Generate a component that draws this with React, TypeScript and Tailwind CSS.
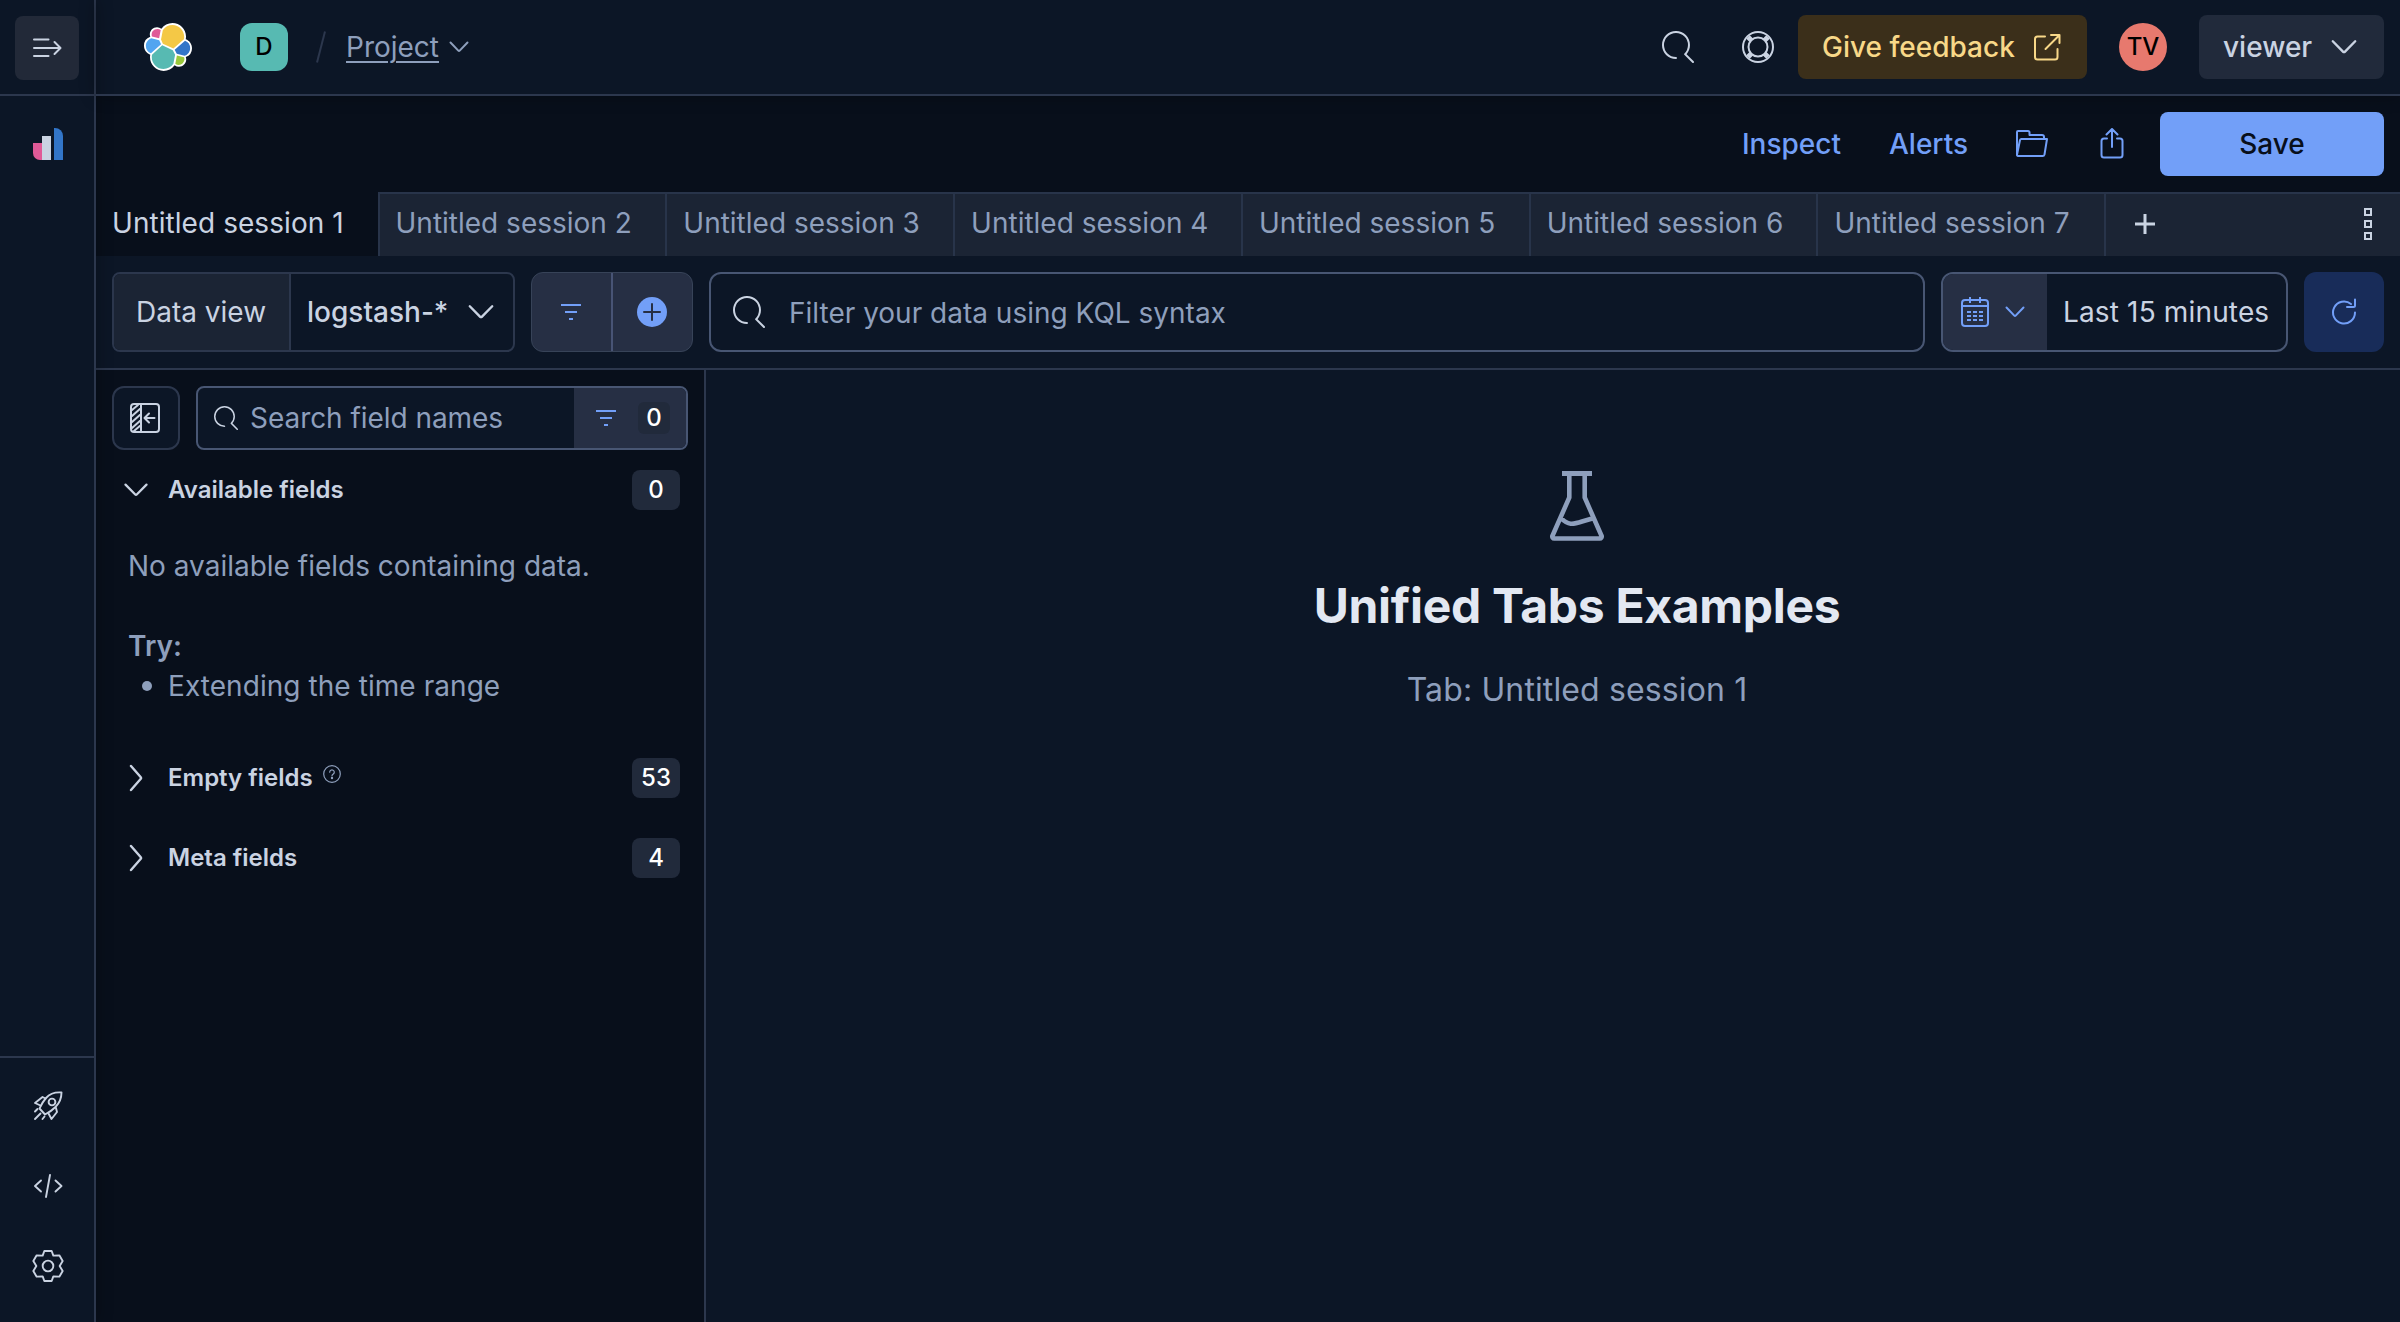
import React from "react";

type P = { className?: string };

const Search = ({ className }: P) => (
  <svg viewBox="0 0 16 16" className={className} fill="currentColor">
    <path d="M11.271 11.978l3.872 3.873a.502.502 0 00.708 0 .502.502 0 000-.708l-3.565-3.564c2.38-2.747 2.267-6.923-.342-9.532-2.73-2.73-7.17-2.73-9.898 0-2.728 2.729-2.728 7.17 0 9.9a6.955 6.955 0 004.949 2.05.5.5 0 000-1 5.96 5.96 0 01-4.242-1.757 6.01 6.01 0 010-8.486 6.004 6.004 0 018.484 0 6.01 6.01 0 010 8.486.5.5 0 00.034.738z" />
  </svg>
);

const Elastic = ({ className }: P) => (
  <svg viewBox="0 0 32 32" className={className}>
    <path fill="#fff" d="M32 16.77c0-2.68-1.66-5.02-4.16-5.94.11-.57.17-1.16.17-1.76C28.01 4.06 23.94 0 18.95 0c-2.92 0-5.63 1.39-7.34 3.75a4.77 4.77 0 00-2.92-1c-2.66 0-4.82 2.16-4.82 4.82 0 .58.1 1.14.3 1.67A6.33 6.33 0 000 15.19c0 2.7 1.67 5.04 4.18 5.95-.11.57-.17 1.16-.17 1.76C4.01 27.89 8.06 31.95 13.05 31.95c2.93 0 5.63-1.41 7.33-3.77a4.8 4.8 0 002.95 1.02c2.66 0 4.82-2.16 4.82-4.82 0-.58-.1-1.14-.3-1.67A6.35 6.35 0 0032 16.77" />
    <path fill="#f4c846" d="M12.58 13.787l7.002 3.211 7.066-6.213A7.849 7.849 0 0026.8 9.245c0-4.328-3.511-7.85-7.826-7.85A7.813 7.813 0 0012.526 4.83l-1.176 6.115 1.23 2.842z" />
    <path fill="#57bab2" d="M5.333 21.226a7.95 7.95 0 00-.15 1.563c0 4.34 3.529 7.873 7.87 7.873 2.61 0 5.05-1.295 6.521-3.467l1.166-6.1-1.556-2.984-7.03-3.214-6.82 6.33z" />
    <path fill="#e05a97" d="M5.288 9.067l4.8 1.138L11.14 4.73a3.785 3.785 0 00-6.058 3.03c0 .45.07.9.206 1.31" />
    <path fill="#51a5f0" d="M4.872 10.214c-2.14.71-3.64 2.78-3.64 5.04 0 2.2 1.36 4.165 3.4 4.942l6.733-6.102-1.236-2.649-5.257-1.231" />
    <path fill="#9bc83c" d="M20.873 27.173a3.78 3.78 0 002.3.79 3.797 3.797 0 003.79-3.8c0-.461-.08-.91-.24-1.34l-4.79-1.12-1.06 5.47" />
    <path fill="#3275c8" d="M21.848 20.563l5.28 1.236c2.14-.71 3.64-2.78 3.64-5.04a5.29 5.29 0 00-3.4-4.933l-6.91 6.07 1.39 2.667" />
  </svg>
);

const line = { fill: "none", stroke: "currentColor", strokeLinecap: "round", strokeLinejoin: "round" } as const;

const ChevronDown = ({ className }: P) => (
  <svg viewBox="0 0 16 10" className={className} {...line} strokeWidth="1.5">
    <path d="M1 1.400 7.500 8a.7.7 0 0 0 1 0L15 1.400" />
  </svg>
);
const ChevronSmall = ({ className }: P) => (
  <svg viewBox="0 0 20 12" className={className} {...line} strokeWidth="2">
    <path d="M1.5 1.5 9.3 9.6a1 1 0 0 0 1.4 0L18.5 1.5" />
  </svg>
);
const ChevronRight = ({ className }: P) => (
  <svg viewBox="0 0 14 28" className={className} {...line} strokeWidth="2.400">
    <path d="M2 2 11.600 13a1.500 1.500 0 0 1 0 2L2 26" />
  </svg>
);
const MenuRight = () => (
  <svg viewBox="0 0 32 32" className="size-8" {...line} strokeWidth="2">
    <path d="M3 7.500h14.500M3 16h26M3 24h14.500M23.500 10l6 6-6 6" />
  </svg>
);
const Analytics = () => (
  <svg viewBox="0 0 30 32" className="h-8 w-[30px]">
    <path fill="#e05a97" d="M0 15h9v17H7a7 7 0 0 1-7-7z" />
    <path fill="#cad3e2" d="M9 8h9v24H9z" />
    <path fill="#3275c8" d="M21 0h1a8 8 0 0 1 8 8v24h-9z" />
  </svg>
);
const Rocket = () => (
  <svg viewBox="0 0 32 32" className="size-8" {...line} strokeWidth="1.9">
    <path d="M29.500 2.500c-6.500-.5-11.500 1-15.500 5.500-3.500 4-5 7-6.500 10.500L13 24.500c3-1.500 6.500-3.500 10.500-7.500 4.500-4.500 6-9 6-14.500z" />
    <circle cx="20" cy="12" r="3.400" />
    <path d="M13.500 8.500 10.500 7 3 13l5.500 2.500M24 18l1 4-5.500 7-3-5.500M3 21.500 5.500 19M3 29l5.500-5.500M10.500 29l2-2.500" />
  </svg>
);
const Code = () => (
  <svg viewBox="0 0 32 32" className="size-8" {...line} strokeWidth="1.9">
    <path d="M9 10.500 3 16l6 5.500M23.500 10.500l6 5.500-6 5.500M18 5l-4 22" />
  </svg>
);
const Gear = () => (
  <svg viewBox="-48 -48 96 96" className="size-8" {...line} strokeWidth="5.700">
    <path d="M-11-45H11L16-31 34-32 44-15 35 0 44 15 34 32 16 31 11 45H-11L-16 31-34 32-44 15-35 0-44-15-34-32-16-31z" />
    <circle r="16" />
  </svg>
);
const Help = () => (
  <svg viewBox="0 0 32 32" className="size-8" fill="none" stroke="currentColor" strokeWidth="2">
    <circle cx="16" cy="16" r="15" />
    <circle cx="16" cy="16" r="9.500" />
    <path d="M9.500 9.500 6 6M22.500 9.500 26 6M9.500 22.500 6 26M22.500 22.500 26 26" strokeWidth="5" />
  </svg>
);
const Popout = () => (
  <svg viewBox="0 0 28 28" className="size-7" {...line} strokeWidth="2">
    <path d="M12 3.500H4.500A2.500 2.500 0 0 0 2 6v18a2.500 2.500 0 0 0 2.500 2.500H22a2.500 2.500 0 0 0 2.500-2.500v-8M18 2h8.500v8M26 2.500 12.500 16" />
  </svg>
);
const Folder = () => (
  <svg viewBox="0 0 32 32" className="size-8" {...line} strokeWidth="2">
    <path d="M1 27V4a1 1 0 0 1 1-1h10a1.500 1.500 0 0 1 1.500 1.500V7H26a2 2 0 0 1 2 2v2M5.500 11H31l-2.500 15.500a2 2 0 0 1-2 1.500H2a1 1 0 0 1-1-1.200L4 12a1.500 1.500 0 0 1 1.500-1z" />
  </svg>
);
const Share = () => (
  <svg viewBox="0 0 32 32" className="size-8" {...line} strokeWidth="2">
    <path d="M11 10.500H8a2.500 2.500 0 0 0-2.500 2.500v14A2.500 2.500 0 0 0 8 29.500h16a2.500 2.500 0 0 0 2.500-2.500V13a2.500 2.500 0 0 0-2.500-2.500h-3M16 19V1.500M10.500 6.500 16 1l5.500 5.500" />
  </svg>
);
const Filter = () => (
  <svg viewBox="0 0 20 16" className="h-4 w-5" {...line} strokeLinecap="butt" strokeWidth="2">
    <path d="M0 1h20M4 8h12M8 15h4" />
  </svg>
);
const PlusCircle = () => (
  <svg viewBox="0 0 30 30" className="size-[30px]">
    <circle cx="15" cy="15" r="15" fill="#729ff8" />
    <path d="M15 7v16M7 15h16" stroke="#262f44" strokeWidth="2" strokeLinecap="round" />
  </svg>
);
const Calendar = () => (
  <svg viewBox="0 0 28 30" className="h-[30px] w-7" {...line} strokeLinecap="butt" strokeWidth="2">
    <rect x="1" y="3" width="26" height="26" rx="3" />
    <path d="M1 9h26M9 0v6M19 0v6" />
    <path d="M6 15h16M6 19h16M6 23h16" strokeDasharray="4 2" />
  </svg>
);
const Refresh = () => (
  <svg viewBox="0 0 32 32" className="size-8" {...line} strokeWidth="2">
    <path d="M27 16.500A11 11 0 1 1 23 8M27 3.500V9.500a1.500 1.500 0 0 1-1.500 1.500H19" />
  </svg>
);
const Collapse = () => (
  <svg viewBox="0 0 30 30" className="size-[30px]" {...line} strokeWidth="2">
    <rect x="1" y="1" width="28" height="28" rx="3" />
    <path d="M11 1v28M24.500 15H15M19 10.500 14.500 15l4.500 4.500M2 7l6-5M2 13l9-8M2 19l9-8M2 25l9-8M4 28l7-6" />
  </svg>
);
const Question = () => (
  <svg viewBox="0 0 18 18" className="size-[18px]" {...line} strokeWidth="1.200">
    <circle cx="9" cy="9" r="8.300" />
    <path d="M6.700 7.200a2.300 2.300 0 1 1 3.600 1.900c-.9.600-1.300 1-1.300 1.700" />
    <circle cx="9" cy="13" r=".6" fill="currentColor" />
  </svg>
);
const Flask = () => (
  <svg viewBox="0 0 54 70" className="h-[70px] w-[54px]" fill="none" stroke="currentColor" strokeWidth="4.600">
    <path d="M12 2.500h30" strokeWidth="5" />
    <path d="M19.300 4v22.500L2.600 64.500a2 2 0 0 0 2 3h44.800a2 2 0 0 0 2-3L34.700 26.500V4M11 47c7 7.500 12 6.500 21 3.500l12-3.500" strokeLinejoin="round" />
  </svg>
);

const Badge = ({ children }: { children: string }) => (
  <span className="flex h-10 w-12 items-center justify-center rounded-lg bg-[#212a3b] text-2xl font-medium text-white">{children}</span>
);

export default function App() {
  return (
    <div className="flex h-[1322px] w-[2400px] overflow-hidden bg-[#0c1626] font-[Inter,sans-serif] text-[28px] leading-10 text-[#cad3e2]">
      <aside className="z-10 flex w-24 shrink-0 flex-col border-r-2 border-[#2c374d] shadow-[0_0_16px_rgba(0,0,0,0.3)]">
        <div className="h-24 border-b-2 border-[#2c374d] pt-4 pl-[15px]">
          <div className="flex size-16 items-center justify-center rounded-lg bg-[#222938]">
            <MenuRight />
          </div>
        </div>
        <div className="flex-1 pt-8 pl-[33px]">
          <Analytics />
        </div>
        <div className="flex h-[266px] flex-col gap-12 border-t-2 border-[#2c374d] pt-8 pl-8">
          <Rocket />
          <Code />
          <Gear />
        </div>
      </aside>

      <div className="flex min-w-0 flex-1 flex-col">
        <header className="z-10 flex h-24 shrink-0 items-center border-b-2 border-[#2c374d] pr-4 pl-12 shadow-[0_0_16px_rgba(0,0,0,0.3)]">
          <Elastic className="size-12" />
          <div className="ml-12 flex size-12 items-center justify-center rounded-xl bg-[#57bab2] text-2xl font-medium text-black">D</div>
          <svg viewBox="0 0 10 32" className="ml-7 h-8 w-2.5" stroke="#2c374d" strokeWidth="2">
            <path d="M9 .5 1 31.500" />
          </svg>
          <a className="ml-5 text-[#8e9fbc] underline decoration-2 underline-offset-4">Project</a>
          <ChevronSmall className="ml-2.5 h-3 w-5 text-[#8e9fbc]" />
          <div className="flex-1" />
          <Search className="mr-12 size-8" />
          <Help />
          <div className="ml-6 flex h-16 w-[289px] items-center rounded-lg bg-[#3b2f1a] pl-6 font-medium text-[#f8d888]">
            Give feedback
            <span className="ml-[18px]">
              <Popout />
            </span>
          </div>
          <div className="ml-8 flex size-12 items-center justify-center rounded-full bg-[#e7796e] text-2xl font-medium text-black">TV</div>
          <div className="ml-8 flex h-16 w-[185px] items-center rounded-lg bg-[#212a3b] pl-6 font-medium">
            viewer
            <ChevronDown className="ml-[18px] h-4 w-[28px]" />
          </div>
        </header>

        <div className="flex h-24 shrink-0 items-center justify-end bg-[#080f1b] pr-4 font-medium text-[#729ff8]">
          <span>Inspect</span>
          <span className="mr-12 ml-12">Alerts</span>
          <Folder />
          <span className="mr-8 ml-12">
            <Share />
          </span>
          <div className="flex h-16 w-56 items-center justify-center rounded-lg bg-[#729ff8] text-[#080f1b]">Save</div>
        </div>

        <div className="flex h-16 shrink-0 text-[#8e9fbc]">
          <div className="w-[281.5px] bg-[#080f1b] pt-[11px] pl-4 tracking-[0.06px] text-[#cad3e2]">Untitled session 1</div>
          {[2, 3, 4, 5, 6, 7].map((n) => (
            <div key={n} className="w-[287.8px] border-t-2 border-l-2 border-[#28344a] bg-[#1b2434] pt-[9px] pl-4">
              Untitled session {n}
            </div>
          ))}
          <div className="flex flex-1 items-center justify-between border-t-2 border-l-2 border-[#28344a] bg-[#1b2434] pr-7 pb-0.5 pl-[29px] text-[#cad3e2]">
            <svg viewBox="0 0 20 20" className="size-5" stroke="currentColor" strokeWidth="3">
              <path d="M10 0v20M0 10h20" />
            </svg>
            <svg viewBox="0 0 8 32" className="h-8 w-2" fill="none" stroke="currentColor" strokeWidth="2">
              <path d="M1 1h6v6H1zM1 13h6v6H1zM1 25h6v6H1z" />
            </svg>
          </div>
        </div>

        <div className="flex h-[114px] shrink-0 items-center gap-4 border-b-2 border-[#2c374d] px-4">
          <div className="flex h-20 w-[403px] overflow-hidden rounded-lg border-2 border-[#2c374d]">
            <div className="flex w-[177px] items-center border-r-2 border-[#2c374d] bg-[#1b2434] pl-[22px]">Data view</div>
            <div className="flex flex-1 items-center justify-between pr-[18px] pl-4 font-medium">
              logstash-*
              <ChevronDown className="h-4 w-[28px]" />
            </div>
          </div>
          <div className="flex h-20 w-[162px] overflow-hidden rounded-xl border border-[#374358] bg-[#262f44] text-[#729ff8]">
            <div className="flex w-[81px] items-center justify-center border-r-2 border-[#485475] pr-0.5">
              <Filter />
            </div>
            <div className="flex flex-1 items-center justify-center pr-0.5">
              <PlusCircle />
            </div>
          </div>
          <div className="flex h-20 flex-1 items-center rounded-xl border-2 border-[#485673] pl-[22px] text-[#8e9fbc]">
            <Search className="mr-6 size-8 text-[#cad3e2]" />
            <span className="pt-0.5">Filter your data using KQL syntax</span>
          </div>
          <div className="flex h-20 w-[347px] overflow-hidden rounded-xl border-2 border-[#485673]">
            <div className="flex w-[104px] items-center bg-[#262f44] pl-[18px] text-[#729ff8]">
              <Calendar />
              <ChevronSmall className="ml-4 h-3 w-5" />
            </div>
            <span className="flex items-center pl-4 tracking-[0.15px]">Last 15 minutes</span>
          </div>
          <div className="flex size-20 items-center justify-center rounded-xl bg-[#182c59] text-[#729ff8]">
            <Refresh />
          </div>
        </div>

        <div className="flex min-h-0 flex-1">
          <section className="w-[610px] shrink-0 border-r-2 border-[#2c374d] bg-[#080f1b] px-4 pt-4">
            <div className="flex h-16 gap-4">
              <div className="flex w-[68px] items-center justify-center rounded-xl border-2 border-[#2c374d] bg-[#0c1626] pr-0.5">
                <Collapse />
              </div>
              <div className="flex w-[492px] items-center overflow-hidden rounded-lg border-2 border-[#485673] bg-[#0c1626] pl-4 text-[#8e9fbc]">
                <Search className="mr-3 size-6 text-[#cad3e2]" />
                <span className="flex-1 tracking-[-0.05px]">Search field names</span>
                <div className="flex h-full w-28 items-center bg-[#262f44] pl-[22px] text-[#729ff8]">
                  <Filter />
                  <span className="ml-[22px] flex size-8 items-center justify-center rounded-md bg-[#212a3b] text-2xl font-medium text-white">0</span>
                </div>
              </div>
            </div>

            <div className="mt-5 flex h-10 items-center pr-2 pl-3 text-2xl font-semibold">
              <ChevronDown className="mr-5 h-4 w-6" />
              <span className="flex-1">Available fields</span>
              <Badge>0</Badge>
            </div>
            <div className="mt-9 pl-4 text-[#8e9fbc]">
              <p>No available fields containing data.</p>
              <p className="mt-10 font-semibold">Try:</p>
              <ul>
                <li className="flex items-center pl-3.5 tracking-[0.06px]">
                  <span className="mr-4 size-2.5 rounded-full bg-[#8e9fbc]" />
                  Extending the time range
                </li>
              </ul>
            </div>
            <div className="mt-[52px] flex h-10 items-center pr-2 pl-[17px] text-2xl font-semibold">
              <ChevronRight className="mr-[25px] h-7 w-3.5" />
              <span>Empty fields</span>
              <span className="mb-2 ml-2.5 flex-1 text-[#8e9fbc]">
                <Question />
              </span>
              <Badge>53</Badge>
            </div>
            <div className="mt-10 flex h-10 items-center pr-2 pl-[17px] text-2xl font-semibold">
              <ChevronRight className="mr-[25px] h-7 w-3.5" />
              <span className="flex-1">Meta fields</span>
              <Badge>4</Badge>
            </div>
          </section>

          <main className="flex flex-1 flex-col items-center pt-[101px] pl-12 text-[#8e9fbc]">
            <Flask />
            <h1 className="mt-[33px] text-5xl leading-[64px] font-bold tracking-[-0.3px] text-[#e3e8f2]">Unified Tabs Examples</h1>
            <p className="mt-7 text-[32px] leading-12 tracking-[0.13px]">Tab: Untitled session 1</p>
          </main>
        </div>
      </div>
    </div>
  );
}
